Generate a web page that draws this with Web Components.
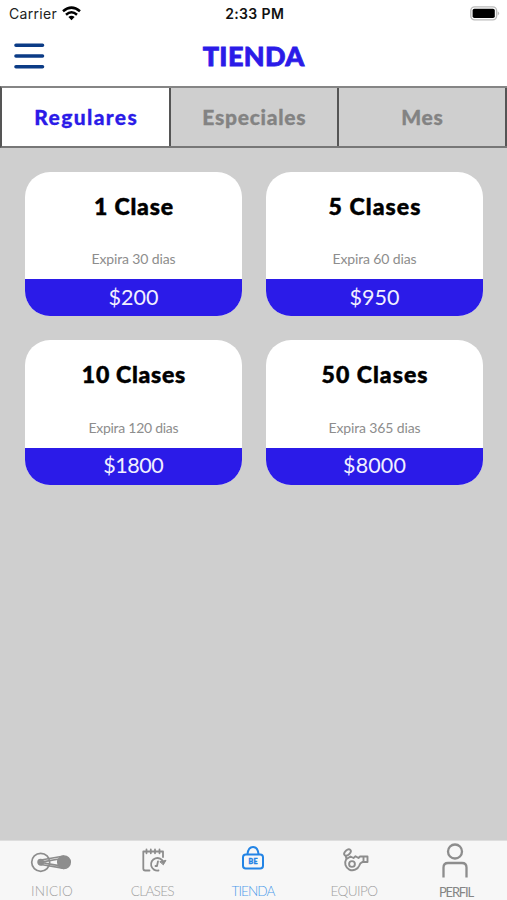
<!DOCTYPE html>
<html lang="es">
<head>
<meta charset="utf-8">
<title>Tienda</title>
<style>
html,body{margin:0;height:100%;overflow:hidden;background:#cfcfcf}
body{font-family:Lato,"Liberation Sans",sans-serif}
</style>
</head>
<body>
<store-app></store-app>
<script>
const define=(name,html,extra)=>{
  const t=document.createElement('template');t.innerHTML=html;
  customElements.define(name,class extends HTMLElement{
    connectedCallback(){
      if(this.shadowRoot)return;
      this.attachShadow({mode:'open'}).append(t.content.cloneNode(true));
      if(extra)extra(this,this.shadowRoot);
    }
  });
};

/* A single line of text, tracked so that it spans the width given in "span". */
define('tracked-text',`<style>
:host{display:block;width:max-content;white-space:nowrap;line-height:1.2}
span{display:inline-block}
</style><span></span>`,(el,root)=>{
  const s=root.querySelector('span');
  s.textContent=el.getAttribute('text');
  const w=parseFloat(el.getAttribute('span'));
  if(w){
    const gap=(w-s.getBoundingClientRect().width)/s.textContent.length;
    s.style.letterSpacing=gap.toFixed(3)+'px';
    s.style.marginRight=(-gap).toFixed(3)+'px';
  }
});

define('status-bar',`<style>
:host{display:grid;grid-template-columns:1fr auto 1fr;align-items:center;height:28px;padding:0 7px 0 9px;box-sizing:border-box;font-family:Inter,"Liberation Sans",sans-serif;font-size:14px;color:#222}
.l{display:flex;align-items:center;gap:5px}
.t{font-weight:600;color:#111}
.b{justify-self:end;margin-top:-1px}
svg{display:block}
.l svg{margin-top:-1px}
</style>
<div class="l"><tracked-text text="Carrier" span="48"></tracked-text>
<svg width="19" height="15" viewBox="0 0 19 15" fill="none" stroke="#000" stroke-width="2.5"><path d="M1 5.3Q9.5-2 18 5.3M4 8.7Q9.5 3.8 15 8.7"/><path d="M6.4 11Q9.5 8.4 12.6 11L9.5 14.2Z" fill="#000" stroke="none"/></svg></div>
<tracked-text class="t" text="2:33 PM" span="59"></tracked-text>
<svg class="b" width="30" height="15" viewBox="0 0 30 15"><rect x=".8" y=".9" width="25.8" height="13" rx="3.8" fill="#fff" stroke="#bbb" stroke-width="1.4"/><rect x="2.6" y="2.7" width="22.2" height="9.4" rx="1.8"/><path d="M27.7 5.2Q30.6 7.4 27.7 9.6Z" fill="#bbb"/></svg>`);

define('nav-header',`<style>
:host{display:grid;grid-template-columns:1fr auto 1fr;align-items:center;height:58px;padding:0 14px 2px;box-sizing:border-box}
.title{font-size:27px;font-weight:900;color:#2b1be8;-webkit-text-stroke:.8px #2b1be8}
svg{display:block}
</style>
<svg width="31" height="28" viewBox="0 0 31 28" stroke="#0b3b86" stroke-width="3.6" stroke-linecap="round"><path d="M2 3.3H28.5M2 14H28.5M2 24.7H28.5"/></svg>
<tracked-text class="title" text="TIENDA" span="102"></tracked-text>`);

define('segment-tab',`<style>
:host{display:flex;align-items:center;justify-content:center;background:#cfcfcf;color:#838383;font-size:21px;font-weight:900;-webkit-text-stroke:.3px;border-right:2px solid #555;padding-bottom:1px;box-sizing:border-box}
:host([active]){background:#fff;color:#2b1be8}
</style><slot></slot>`);

define('segment-bar',`<style>
:host{display:grid;grid-template-columns:169px 168px 168px;height:62px;box-sizing:border-box;border-left:2px solid #555;border-top:2px solid #858585;border-bottom:2px solid #777}
</style><slot></slot>`);

define('class-card',`<style>
:host{display:flex;flex-direction:column;height:144.3px;border-radius:25px;overflow:hidden;background:#fff}
.body{flex:1;display:flex;flex-direction:column;align-items:center;justify-content:space-between;padding:21px 0 11.5px}
.name{font-size:23px;font-weight:900;color:#000;-webkit-text-stroke:.5px #000}
.exp{font-size:14px;color:#8d8d8d;font-weight:400}
.price{height:36.8px;background:#2b1be8;color:#f1efff;font-size:21.5px;display:flex;align-items:center;justify-content:center}
</style>
<div class="body"><tracked-text class="name"></tracked-text><tracked-text class="exp"></tracked-text></div>
<div class="price"><tracked-text class="cost"></tracked-text></div>`,(el,root)=>{
  const w=el.getAttribute('spans').split(' ');
  [['name',0],['exp',1],['cost',2]].forEach(([k,i])=>{
    const old=root.querySelector('.'+k),n=document.createElement('tracked-text');
    n.className=k;n.setAttribute('text',el.getAttribute(k));n.setAttribute('span',w[i]);
    old.replaceWith(n);
  });
});

define('card-grid',`<style>
:host{display:grid;grid-template-columns:217px 217px;gap:24.4px 24px;padding:23.8px 24px 0 25px;align-content:start;flex:1;background:#cfcfcf}
</style><slot></slot>`);

define('tab-item',`<style>
:host{display:grid;grid-template-rows:42px auto;justify-items:center;align-items:center;color:#a0a0a0;font-size:13.6px;font-weight:300}
:host([active]){color:#4d9bea}
:host([strong]){color:#858585;font-size:13px;font-weight:400;grid-template-rows:43.5px auto}
::slotted(svg){display:block}
</style><slot></slot>`);

define('tab-bar',`<style>
:host{display:grid;grid-template-columns:repeat(5,100.8px);height:60px;background:#f7f7f7;border-top:1px solid #dedede;box-sizing:border-box;padding-left:1px;align-items:start}
</style><slot></slot>`);

define('store-app',`<style>
:host{display:flex;flex-direction:column;width:507px;height:900px;background:#fff}
.nudge{padding-left:4px}
.label{padding-left:1px}
</style>
<status-bar></status-bar>
<nav-header></nav-header>
<segment-bar>
<segment-tab active><tracked-text text="Regulares" span="104"></tracked-text></segment-tab>
<segment-tab><tracked-text text="Especiales" span="104"></tracked-text></segment-tab>
<segment-tab><tracked-text text="Mes" span="42"></tracked-text></segment-tab>
</segment-bar>
<card-grid>
<class-card name="1 Clase" exp="Expira 30 dias" cost="$200" spans="80 84 50"></class-card>
<class-card name="5 Clases" exp="Expira 60 dias" cost="$950" spans="93 84 50"></class-card>
<class-card name="10 Clases" exp="Expira 120 dias" cost="$1800" spans="104 90 60"></class-card>
<class-card name="50 Clases" exp="Expira 365 dias" cost="$8000" spans="107 92 63"></class-card>
</card-grid>
<tab-bar>
<tab-item>
<svg width="42" height="42" viewBox="0 0 42 42" fill="none" stroke="#8d8d8d" stroke-width="1.7"><circle cx="10.7" cy="21.3" r="9"/><circle cx="10.7" cy="21.3" r="2.6" fill="#8d8d8d"/><path d="M11 19L34 15M11 23.5L34 27.4M14 20.6L29 18M14 22L29 24.6"/><circle cx="34" cy="21.2" r="6.2" fill="#8d8d8d"/></svg>
<tracked-text class="label" text="INICIO" span="42"></tracked-text></tab-item>
<tab-item>
<svg class="nudge" width="26" height="42" viewBox="0 0 26 42" fill="none" stroke="#8d8d8d" stroke-width="1.8" stroke-linecap="round" stroke-linejoin="round"><path d="M8.500 29.500H4.200Q2.300 29.500 2.300 27.500V10.500H22V16M5.500 8.500V12.300M9.800 8.500V12.300M14 8.500V12.300M18.500 8.500V12.300"/><path d="M17.500 29.500A6.300 6.300 0 1 1 22.200 21M17 20.300L16 25H14.500"/><path d="M19.200 20.700L25 19.300L22.500 23.500Z" fill="#8d8d8d" stroke-width="1"/></svg>
<tracked-text class="label" text="CLASES" span="43"></tracked-text></tab-item>
<tab-item active>
<svg width="24" height="42" viewBox="0 0 24 42" fill="none" stroke="#2384e5" stroke-width="2"><rect x="2" y="13.500" width="20" height="14" rx="2.800"/><path d="M6.500 13.200C7 8.500 9.200 6 12 6S17 8.500 17.500 13.200"/><text x="7.500" y="22.800" font-family="Lato,sans-serif" font-size="7" font-weight="900" textLength="9" fill="#2384e5" stroke="#2384e5" stroke-width=".4">BE</text></svg>
<tracked-text class="label" text="TIENDA" span="43"></tracked-text></tab-item>
<tab-item>
<svg class="nudge" width="28" height="42" viewBox="0 0 28 42" fill="none" stroke="#8d8d8d" stroke-width="1.900" stroke-linejoin="round"><ellipse cx="5.500" cy="11.500" rx="3.800" ry="2.400" transform="rotate(-42 5.500 11.500)"/><path d="M3.500 14L4.500 18M4.200 18.200A7.300 7.300 0 1 0 17.300 24.500Q17.800 22 20.500 21H25.500V15.500H18L16.500 17L13.500 15.200L11.500 17L8.500 15.500ZM21.500 15.500V21"/><circle cx="10" cy="23" r="2.900"/></svg>
<tracked-text class="label" text="EQUIPO" span="47"></tracked-text></tab-item>
<tab-item strong>
<svg width="28" height="43" viewBox="0 0 28 43" fill="none" stroke="#8d8d8d" stroke-width="2.300"><circle cx="14" cy="10.500" r="7"/><path d="M2.500 36.500V26.500Q2.500 22 7 22H21Q25.500 22 25.500 26.500V36.500"/></svg>
<tracked-text class="nudge" text="PERFIL" span="34"></tracked-text></tab-item>
</tab-bar>`);
</script>
</body>
</html>
